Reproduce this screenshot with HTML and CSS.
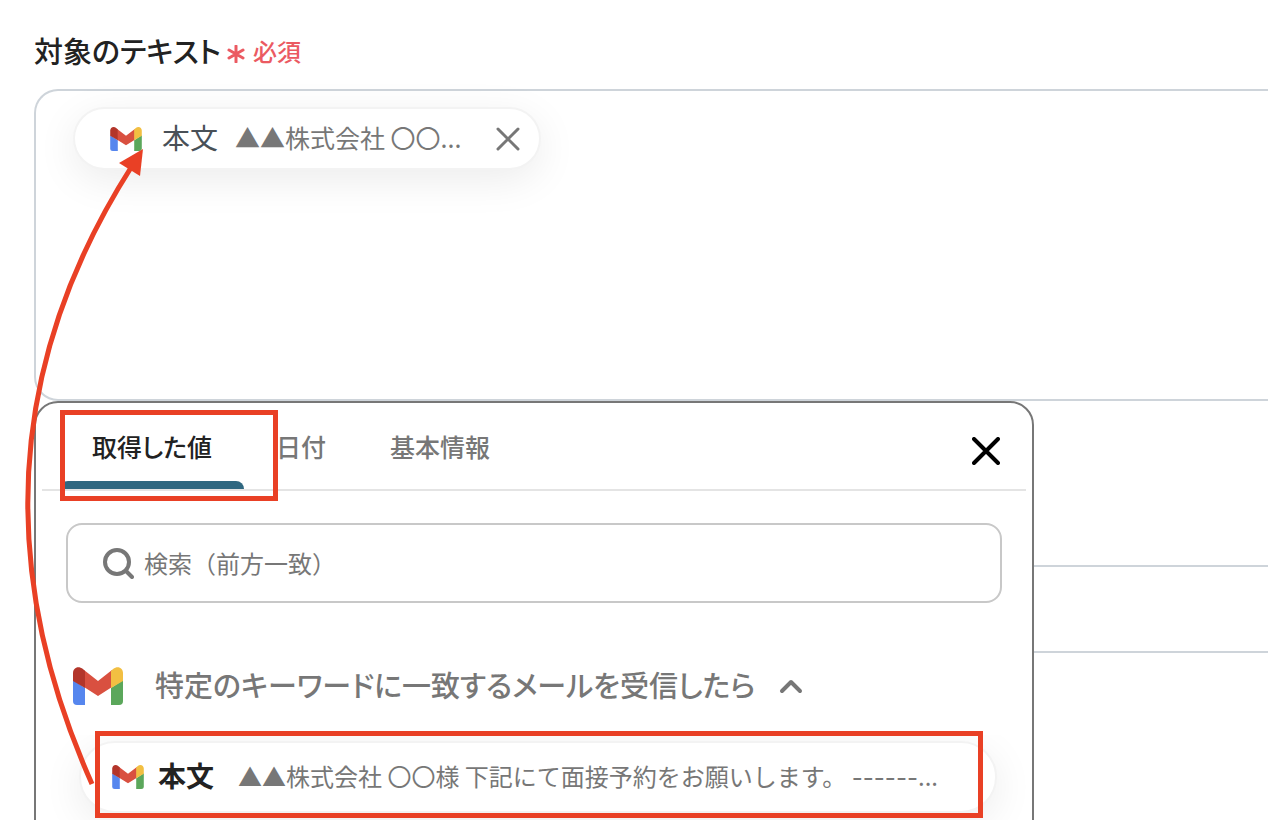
FILE: index.html
```html
<!DOCTYPE html>
<html lang="ja">
<head>
  <meta charset="UTF-8" />
  <meta name="viewport" content="width=device-width, initial-scale=1" />
  <title>対象のテキスト</title>
  <link rel="stylesheet" href="styles.css">
</head>
<body>
  <svg class="sprite" aria-hidden="true">
    <symbol id="gmail" viewBox="0 0 50 38">
      <path fill="#5686ee" d="M0 13l12 8v17H4a4 4 0 0 1-4-4z" />
      <path fill="#5ba75b" d="M50 13l-12 8v17h8a4 4 0 0 0 4-4z" />
      <path fill="#d95040" d="M11 3l14 11L39 3v17L25 29 11 20z" />
      <path fill="#b3352a" d="M0 14V6C0 1 5-2 10 2l2 2v17z" />
      <path fill="#f2bf42" d="M50 14V6c0-5-5-8-10-4l-2 2v17z" />
    </symbol>
  </svg>

  <main class="page">
    <div class="label" id="campo-label">
      <span class="label-texto">対象のテキスト</span>
      <svg class="asterisco" viewBox="0 0 18 18"><path d="M9 1v16M2 5l14 8M2 13l14-8" /></svg>
      <span class="requerido">必須</span>
    </div>

    <div class="campo">
      <div class="editor" role="textbox" aria-labelledby="campo-label">
        <div class="chip">
          <svg class="gmail"><use href="#gmail" /></svg>
          <span class="chip-nombre">本文</span>
          <span class="chip-valor">▲▲株式会社 〇〇...</span>
          <button type="button" class="cerrar" aria-label="削除">
            <svg viewBox="0 0 24 24"><path d="M2 2l20 20M22 2L2 22" /></svg>
          </button>
        </div>
      </div>

      <!-- Panel de valores -->
      <div class="panel">
        <div class="tabs">
          <button type="button" class="tab activo">取得した値</button>
          <button type="button" class="tab">日付</button>
          <button type="button" class="tab">基本情報</button>
          <button type="button" class="cerrar cerrar-panel" aria-label="閉じる">
            <svg viewBox="0 0 28 28"><path d="M2 2l24 24M26 2L2 26" /></svg>
          </button>
        </div>

        <label class="busqueda">
          <svg viewBox="0 0 32 32"><circle cx="15" cy="15" r="12" /><path d="M24 24l6 6" /></svg>
          <input type="text" placeholder="検索（前方一致）" aria-label="検索" />
        </label>

        <button type="button" class="grupo">
          <svg class="gmail gmail-grande"><use href="#gmail" /></svg>
          <span>特定のキーワードに一致するメールを受信したら</span>
          <svg class="flecha-arriba" viewBox="0 0 24 16"><path d="M3 13l9-9 9 9" /></svg>
        </button>

        <div class="lista">
          <button type="button" class="item">
            <svg class="gmail"><use href="#gmail" /></svg>
            <strong>本文</strong>
            <span class="item-valor">▲▲株式会社 〇〇様 下記にて面接予約をお願いします。 <span class="guiones">------</span>...</span>
          </button>
        </div>
      </div>
    </div>

    <div class="bloque bloque-alto"></div>
    <div class="bloque"></div>

    <!-- Marcas rojas -->
    <div class="marca marca-tab"></div>
    <div class="marca marca-item"></div>
    <svg class="marca-flecha" viewBox="0 0 160 820">
      <path class="linea" d="M92 784Q-54 457 132 166" />
      <path class="punta" d="M143 149l-24 14 21 13z" />
    </svg>
  </main>
</body>
</html>
```
FILE: styles.css
```css
body {
  margin: 0;
  background: #fff;
  color: #222;
  font-family: "Noto Sans CJK JP", sans-serif;
}

* {
  box-sizing: border-box;
}

button,
input {
  font-family: inherit;
  color: inherit;
  background: none;
  border: none;
  margin: 0;
  padding: 0;
}

button {
  cursor: pointer;
}

svg {
  display: block;
  flex: none;
  fill: none;
  stroke-linecap: round;
  stroke-linejoin: round;
}

.sprite {
  position: absolute;
  width: 0;
  height: 0;
}

.page {
  position: relative;
  height: 100vh;
  overflow: hidden;
  padding: 32px 0 0 34px;
}

.label {
  display: flex;
  align-items: center;
  height: 40px;
  margin-bottom: 17px;
  font-weight: 500;
}

.label-texto {
  padding-bottom: 4px;
  font-size: 29px;
  font-feature-settings: "palt";
}

.asterisco {
  width: 18px;
  height: 18px;
  margin: 4px 8px 0 6px;
  stroke: #eb5a62;
  stroke-width: 3;
}

.requerido {
  padding-bottom: 4px;
  font-size: 24px;
  color: #eb5a62;
}

.campo {
  position: relative;
}

.editor {
  height: 312px;
  padding: 16px 37px;
  border: 2px solid #ced4da;
  border-right: none;
  border-radius: 24px 0 0 24px;
}

.chip,
.item {
  display: flex;
  align-items: center;
  background: #fff;
  border: 2px solid #f3f3f3;
  border-radius: 36px;
  box-shadow: 0 10px 40px rgba(0, 0, 0, 0.08);
  white-space: nowrap;
}

.chip {
  width: 468px;
  height: 63px;
  padding: 0 19px 0 35px;
}

.chip span,
.grupo span,
.item strong,
.item-valor {
  padding-bottom: 4px;
}

.gmail {
  width: 32px;
  height: 24px;
}

.gmail-grande {
  width: 50px;
  height: 38px;
}

.chip-nombre {
  margin-left: 20px;
  font-size: 28px;
  color: #495057;
}

.chip-valor {
  margin-left: 17px;
  font-size: 25px;
  color: #777;
}

.cerrar {
  margin-left: auto;
}

.cerrar svg {
  width: 24px;
  height: 24px;
  stroke: #777;
  stroke-width: 3;
}

.panel {
  position: absolute;
  top: 100%;
  left: 0;
  width: 1000px;
  height: 600px;
  background: #fff;
  border: 2px solid #777;
  border-radius: 24px;
}

.tabs {
  display: flex;
  align-items: center;
  height: 88px;
  margin: 0 6px;
  padding: 0 26px 0 18px;
  border-bottom: 2px solid #e4e4e4;
}

.tab {
  height: 86px;
  padding: 0 32px;
  font-size: 25px;
  font-weight: 500;
  font-feature-settings: "palt";
  color: #777;
}

.tab.activo {
  position: relative;
  color: #222;
}

.tab.activo::after {
  content: "";
  position: absolute;
  left: 0;
  right: 0;
  bottom: 0;
  height: 8px;
  border-radius: 8px 8px 0 0;
  background: #2f6780;
}

.cerrar-panel {
  padding-top: 10px;
}

.cerrar-panel svg {
  width: 28px;
  height: 28px;
  stroke: #000;
  stroke-width: 4;
}

.busqueda {
  display: flex;
  align-items: center;
  gap: 10px;
  height: 80px;
  margin: 32px 30px 0;
  padding: 0 34px;
  border: 2px solid #c8c8c8;
  border-radius: 16px;
}

.busqueda svg {
  width: 32px;
  height: 32px;
  stroke: #777;
  stroke-width: 4;
}

.busqueda input {
  flex: 1;
  padding-bottom: 2px;
  font-size: 24px;
  outline: none;
}

.busqueda input::placeholder {
  color: #777;
  opacity: 1;
}

.grupo {
  display: flex;
  align-items: center;
  height: 60px;
  margin: 53px 0 0 37px;
  font-size: 29px;
  font-weight: 500;
  font-feature-settings: "palt";
  color: #777;
}

.grupo span {
  margin: 0 24px 0 32px;
}

.flecha-arriba {
  width: 24px;
  height: 16px;
  stroke: #777;
  stroke-width: 4;
}

.lista {
  height: 200px;
  margin: 19px 6px 0 14px;
  padding: 6px 29px;
  overflow: hidden;
}

.item {
  width: 100%;
  height: 72px;
  padding: 0 31px;
  text-align: left;
}

.item strong {
  margin-left: 14px;
  font-size: 28px;
  font-weight: 700;
}

.item-valor {
  margin-left: 24px;
  font-size: 24px;
  color: #777;
}

.guiones {
  font-family: Inter, sans-serif;
}

.bloque {
  height: 86px;
  border-bottom: 2px solid #ced4da;
}

.bloque-alto {
  height: 166px;
}

.marca {
  position: absolute;
  border: 5px solid #e94025;
}

.marca-tab {
  left: 60px;
  top: 410px;
  width: 218px;
  height: 91px;
}

.marca-item {
  left: 95px;
  top: 731px;
  width: 888px;
  height: 87px;
}

.marca-flecha {
  position: absolute;
  top: 0;
  left: 0;
  width: 160px;
  height: 820px;
  pointer-events: none;
}

.linea {
  stroke: #e94025;
  stroke-width: 5;
  stroke-linecap: butt;
}

.punta {
  fill: #e94025;
}
```
